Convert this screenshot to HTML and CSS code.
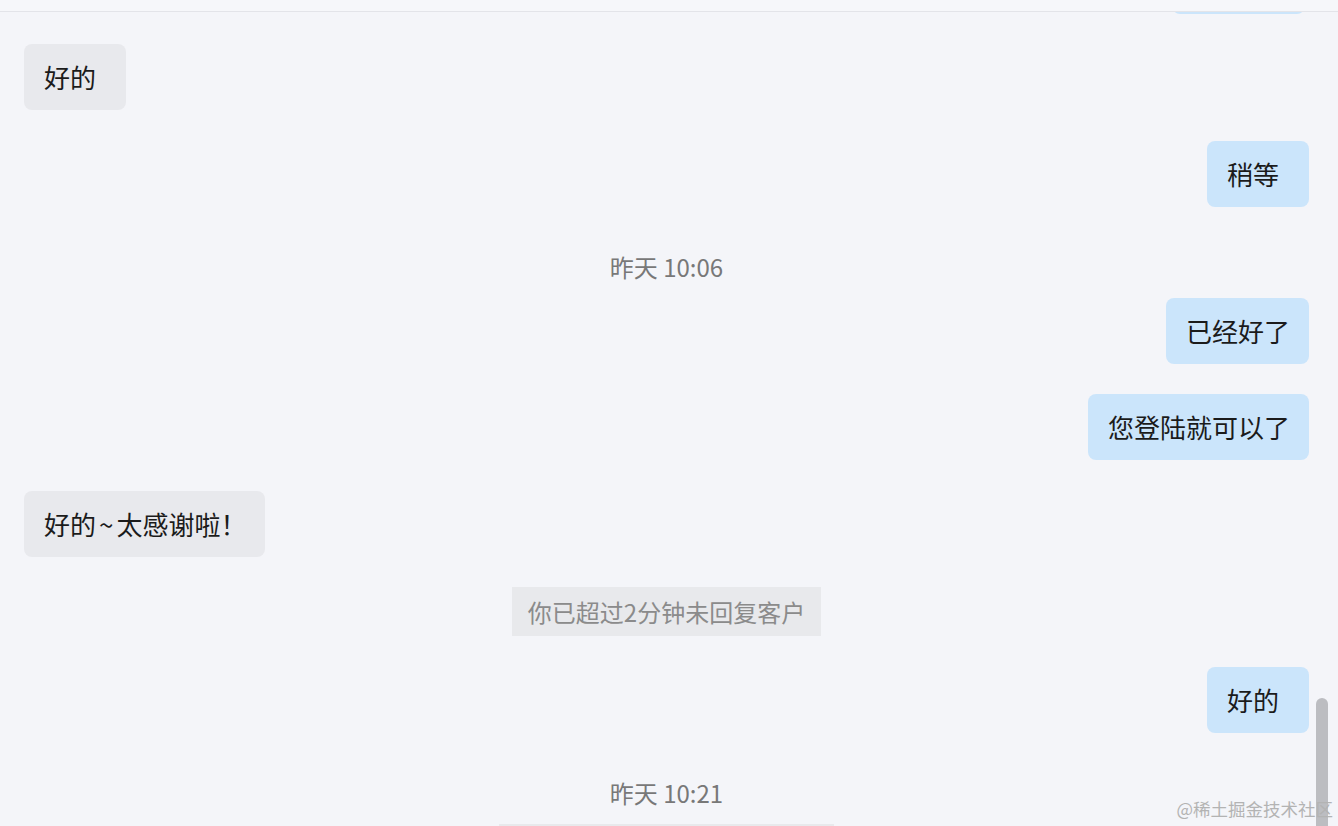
FILE: index.html
```html
<!DOCTYPE html>
<html lang="zh-CN">
<head>
<meta charset="utf-8">
<title>会话</title>
<link rel="stylesheet" href="styles.css">
</head>
<body>
<div class="app">
  <div class="topbar"></div>
  <div class="chat">
    <div class="list">
      <div class="row right"><div class="bubble mine ghost-bubble"></div></div>
      <div class="row left"><div class="bubble theirs">好的</div></div>
      <div class="row right"><div class="bubble mine">稍等</div></div>
      <div class="time">昨天 10:06</div>
      <div class="row right"><div class="bubble mine">已经好了</div></div>
      <div class="row right"><div class="bubble mine">您登陆就可以了</div></div>
      <div class="row left"><div class="bubble theirs">好的<span class="tilde">~</span>太感谢啦！</div></div>
      <div class="notice">你已超过2分钟未回复客户</div>
      <div class="row right"><div class="bubble mine">好的</div></div>
      <div class="time">昨天 10:21</div>
      <div class="notice ghost-notice"></div>
    </div>
  </div>
  <div class="scrollbar"></div>
  <div class="watermark">@稀土掘金技术社区</div>
</div>
</body>
</html>
```
FILE: styles.css
```css
html, body {
  margin: 0;
  padding: 0;
}
body {
  background: #f4f5f9;
  font-family: "Noto Sans CJK SC", "Noto Sans", sans-serif;
  color: #1b1b1b;
}
.app {
  position: relative;
  height: 826px;
  display: flex;
  flex-direction: column;
  overflow: hidden;
}
.topbar {
  height: 11px;
  flex: none;
  background: #f6f7fa;
  border-bottom: 1px solid #e3e4e9;
  position: relative;
  z-index: 1;
}
.chat {
  flex: 1;
  overflow: hidden;
  padding: 0 29px 0 24px;
}
.list {
  display: flex;
  flex-direction: column;
  gap: 30.5px;
  margin-top: -64.5px;
}
.row {
  display: flex;
}
.row.left {
  justify-content: flex-start;
}
.row.right {
  justify-content: flex-end;
}
.bubble {
  box-sizing: border-box;
  min-width: 102px;
  padding: 16px 19px 16px 20px;
  font-size: 26px;
  line-height: 34px;
  border-radius: 8px;
  white-space: nowrap;
}
.bubble.theirs {
  background: #e8e9ed;
}
.bubble.mine {
  background: #cbe5fb;
}
.ghost-bubble {
  width: 133px;
  height: 66px;
  margin-right: 4px;
}
.tilde {
  padding: 0 3px;
}
.time {
  padding-top: 15px;
  margin-bottom: -14px;
  line-height: 29px;
  font-size: 24px;
  color: #787878;
  text-align: center;
}
.notice {
  align-self: center;
  background: #e8e9ec;
  padding: 0 16px;
  line-height: 49px;
  font-size: 24px;
  color: #8b8b8b;
  white-space: nowrap;
}
.ghost-notice {
  width: 303px;
  height: 49px;
}
.scrollbar {
  position: absolute;
  left: 1316px;
  top: 698px;
  width: 12px;
  height: 140px;
  border-radius: 6px;
  background: #bcbdc1;
}
.watermark {
  position: absolute;
  right: 5px;
  bottom: 6px;
  font-size: 17.5px;
  line-height: 22px;
  color: #b3b3b3;
}
```
